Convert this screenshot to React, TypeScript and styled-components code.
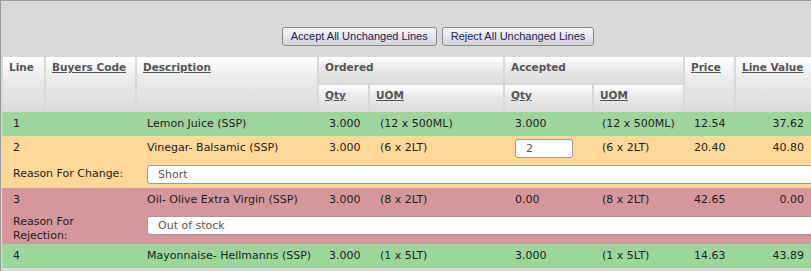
import React from "react";
import styled, { createGlobalStyle } from "styled-components";

const GlobalStyle = createGlobalStyle`
  html, body {
    margin: 0;
    padding: 0;
    background: #d9d9d9;
    overflow: hidden;
  }
`;

const COLS = "41px 89px 180px 49px 133px 87px 89px 49px 75px 60px";

const Page = styled.div`
  width: 872px;
  min-height: 271px;
  border-top: 1px solid #9a9a9a;
  border-left: 1px solid #9a9a9a;
  padding-left: 1px;
  background: #d9d9d9;
  font-family: "DejaVu Sans", Verdana, sans-serif;
`;

const Toolbar = styled.div`
  display: flex;
  justify-content: center;
  gap: 5px;
  padding: 26px 0 11px;
`;

const Button = styled.button`
  height: 19px;
  padding: 0 8px;
  border: 1px solid #8a8a8a;
  border-radius: 3px;
  background: linear-gradient(#f8f8fb, #e4e4ea 55%, #d2d2da);
  color: #1c1c50;
  font-family: "Liberation Sans", Arial, sans-serif;
  font-size: 11px;
  line-height: 17px;
  cursor: pointer;
`;

const HeadGrid = styled.div`
  display: grid;
  grid-template-columns: ${COLS};
  grid-template-rows: 26px 26px;
  gap: 2px;
  margin-left: 1px;
  padding-bottom: 1px;
`;

const HeadCell = styled.div<{ $col: string; $row: string }>`
  grid-column: ${(p) => p.$col};
  grid-row: ${(p) => p.$row};
  background: linear-gradient(#ffffff, #e9e9e9 45%, #dcdcdc);
  padding: 3px 0 0 6px;
  font-size: 10.5px;
  font-weight: bold;
  color: #555;
  line-height: 14px;
  white-space: nowrap;
  overflow: hidden;
`;

const SortLink = styled.a`
  color: #555;
  text-decoration: underline;
`;

const Row = styled.div<{ $bg: string }>`
  display: grid;
  grid-template-columns: ${COLS};
  column-gap: 2px;
  padding-left: 1px;
  background: ${(p) => p.$bg};
  font-size: 11px;
  color: #1e1e1e;
  line-height: 14px;
`;

const Cell = styled.div<{ $pl?: number; $right?: boolean }>`
  padding: 5px ${(p) => (p.$right ? 7 : 0)}px 5px ${(p) => p.$pl ?? 10}px;
  text-align: ${(p) => (p.$right ? "right" : "left")};
  white-space: nowrap;
`;

const ReasonLabel = styled.div<{ $pt: number }>`
  grid-column: 1 / 3;
  align-self: center;
  width: 112px;
  padding: ${(p) => p.$pt}px 0 ${(p) => (p.$pt ? 1 : 0)}px 10px;
`;

const ReasonCell = styled.div<{ $pt: number }>`
  grid-column: 3 / -1;
  align-self: start;
  padding: ${(p) => p.$pt}px 0 4px 10px;
`;

const TextInput = styled.input<{ $w?: string }>`
  display: block;
  box-sizing: border-box;
  width: ${(p) => p.$w ?? "100%"};
  height: 19px;
  border: 1px solid #9a9a9a;
  border-radius: 3px;
  background: #fff;
  padding: 0 10px;
  font-family: "DejaVu Sans", Verdana, sans-serif;
  font-size: 11px;
  color: #555;
  outline: none;
`;

const QtyCell = styled.div`
  padding: 3px 0 0 10px;
`;

const GREEN = "#9dd69b";
const ORANGE = "#fed799";
const RED = "#d5979c";

interface Line {
  no: number;
  desc: string;
  qty: string;
  uom: string;
  accQty: string;
  accUom: string;
  price: string;
  value: string;
  state: "accepted" | "changed" | "rejected";
  reason?: string;
  editQty?: string;
}

const lines: Line[] = [
  { no: 1, desc: "Lemon Juice (SSP)", qty: "3.000", uom: "(12 x 500ML)", accQty: "3.000", accUom: "(12 x 500ML)", price: "12.54", value: "37.62", state: "accepted" },
  { no: 2, desc: "Vinegar- Balsamic (SSP)", qty: "3.000", uom: "(6 x 2LT)", accQty: "2", accUom: "(6 x 2LT)", price: "20.40", value: "40.80", state: "changed", reason: "Short", editQty: "2" },
  { no: 3, desc: "Oil- Olive Extra Virgin (SSP)", qty: "3.000", uom: "(8 x 2LT)", accQty: "0.00", accUom: "(8 x 2LT)", price: "42.65", value: "0.00", state: "rejected", reason: "Out of stock" },
  { no: 4, desc: "Mayonnaise- Hellmanns (SSP)", qty: "3.000", uom: "(1 x 5LT)", accQty: "3.000", accUom: "(1 x 5LT)", price: "14.63", value: "43.89", state: "accepted" },
];

const bgFor = (s: Line["state"]) => (s === "accepted" ? GREEN : s === "changed" ? ORANGE : RED);

function App() {
  return (
    <>
      <GlobalStyle />
      <Page>
        <Toolbar>
          <Button>Accept All Unchanged Lines</Button>
          <Button>Reject All Unchanged Lines</Button>
        </Toolbar>

        <HeadGrid>
          <HeadCell $col="1" $row="1 / 3">Line</HeadCell>
          <HeadCell $col="2" $row="1 / 3"><SortLink>Buyers Code</SortLink></HeadCell>
          <HeadCell $col="3" $row="1 / 3"><SortLink>Description</SortLink></HeadCell>
          <HeadCell $col="4 / 6" $row="1">Ordered</HeadCell>
          <HeadCell $col="4" $row="2"><SortLink>Qty</SortLink></HeadCell>
          <HeadCell $col="5" $row="2"><SortLink>UOM</SortLink></HeadCell>
          <HeadCell $col="6 / 8" $row="1">Accepted</HeadCell>
          <HeadCell $col="6" $row="2"><SortLink>Qty</SortLink></HeadCell>
          <HeadCell $col="7" $row="2"><SortLink>UOM</SortLink></HeadCell>
          <HeadCell $col="8" $row="1 / 3"><SortLink>Price</SortLink></HeadCell>
          <HeadCell $col="9" $row="1 / 3"><SortLink>Line Value</SortLink></HeadCell>
          <HeadCell $col="10" $row="1 / 3" />
        </HeadGrid>

        {lines.map((l) => (
          <React.Fragment key={l.no}>
            <Row $bg={bgFor(l.state)}>
              <Cell>{l.no}</Cell>
              <Cell />
              <Cell>{l.desc}</Cell>
              <Cell>{l.qty}</Cell>
              <Cell>{l.uom}</Cell>
              {l.editQty ? (
                <QtyCell>
                  <TextInput $w="58px" defaultValue={l.editQty} />
                </QtyCell>
              ) : (
                <Cell>{l.accQty}</Cell>
              )}
              <Cell $pl={8}>{l.accUom}</Cell>
              <Cell $pl={9}>{l.price}</Cell>
              <Cell $right>{l.value}</Cell>
              <Cell />
            </Row>
            {l.reason && (
              <Row $bg={bgFor(l.state)}>
                <ReasonLabel $pt={l.state === "changed" ? 0 : 3}>
                  {l.state === "changed" ? "Reason For Change:" : "Reason For Rejection:"}
                </ReasonLabel>
                <ReasonCell $pt={l.state === "changed" ? 5 : 4}>
                  <TextInput defaultValue={l.reason} />
                </ReasonCell>
              </Row>
            )}
          </React.Fragment>
        ))}
      </Page>
    </>
  );
}

export default App;
